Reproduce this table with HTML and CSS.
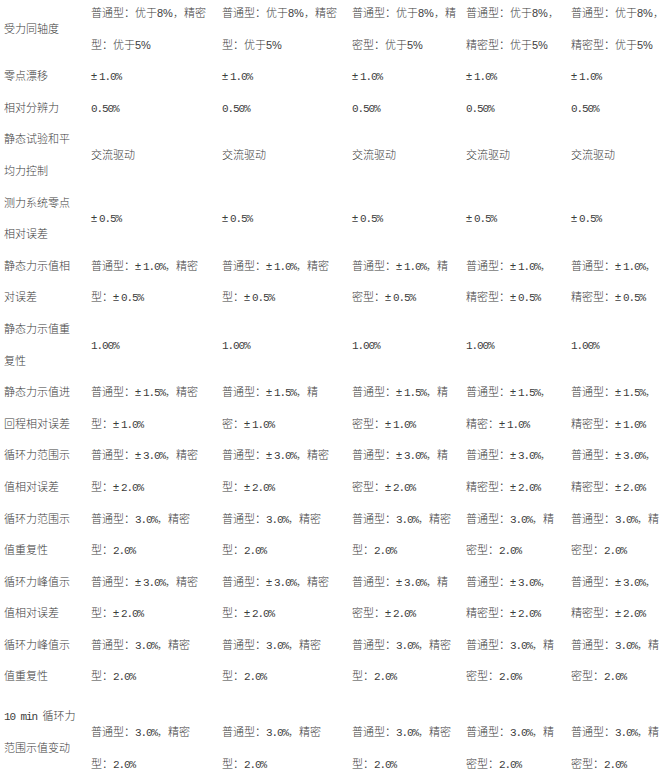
FILE: index.html
```html
<!DOCTYPE html>
<html lang="zh">
<head>
<meta charset="utf-8">
<title>技术参数</title>
<link rel="stylesheet" href="styles.css">
</head>
<body>
<table class="spec">
  <colgroup>
    <col class="c1"><col class="c2"><col class="c3"><col class="c4"><col class="c5"><col class="c6">
  </colgroup>
  <tbody>
    <tr>
      <td class="lab">受力同轴度</td>
      <td>普通型：优于<span class="s">8%</span>，精密<br>型：优于<span class="s">5%</span></td>
      <td>普通型：优于<span class="s">8%</span>，精密<br>型：优于<span class="s">5%</span></td>
      <td>普通型：优于<span class="s">8%</span>，精<br>密型：优于<span class="s">5%</span></td>
      <td>普通型：优于<span class="s">8%</span>，<br>精密型：优于<span class="s">5%</span></td>
      <td>普通型：优于<span class="s">8%</span>，<br>精密型：优于<span class="s">5%</span></td>
    </tr>
    <tr>
      <td class="lab">零点漂移</td>
      <td><span class="pm">±</span><span class="n">1.0%</span></td>
      <td><span class="pm">±</span><span class="n">1.0%</span></td>
      <td><span class="pm">±</span><span class="n">1.0%</span></td>
      <td><span class="pm">±</span><span class="n">1.0%</span></td>
      <td><span class="pm">±</span><span class="n">1.0%</span></td>
    </tr>
    <tr>
      <td class="lab">相对分辨力</td>
      <td><span class="n">0.50%</span></td>
      <td><span class="n">0.50%</span></td>
      <td><span class="n">0.50%</span></td>
      <td><span class="n">0.50%</span></td>
      <td><span class="n">0.50%</span></td>
    </tr>
    <tr>
      <td class="lab">静态试验和平<br>均力控制</td>
      <td>交流驱动</td>
      <td>交流驱动</td>
      <td>交流驱动</td>
      <td>交流驱动</td>
      <td>交流驱动</td>
    </tr>
    <tr>
      <td class="lab">测力系统零点<br>相对误差</td>
      <td><span class="pm">±</span><span class="n">0.5%</span></td>
      <td><span class="pm">±</span><span class="n">0.5%</span></td>
      <td><span class="pm">±</span><span class="n">0.5%</span></td>
      <td><span class="pm">±</span><span class="n">0.5%</span></td>
      <td><span class="pm">±</span><span class="n">0.5%</span></td>
    </tr>
    <tr>
      <td class="lab">静态力示值相<br>对误差</td>
      <td>普通型：<span class="pm">±</span><span class="n">1.0%</span>，精密<br>型：<span class="pm">±</span><span class="n">0.5%</span></td>
      <td>普通型：<span class="pm">±</span><span class="n">1.0%</span>，精密<br>型：<span class="pm">±</span><span class="n">0.5%</span></td>
      <td>普通型：<span class="pm">±</span><span class="n">1.0%</span>，精<br>密型：<span class="pm">±</span><span class="n">0.5%</span></td>
      <td>普通型：<span class="pm">±</span><span class="n">1.0%</span>，<br>精密型：<span class="pm">±</span><span class="n">0.5%</span></td>
      <td>普通型：<span class="pm">±</span><span class="n">1.0%</span>，<br>精密型：<span class="pm">±</span><span class="n">0.5%</span></td>
    </tr>
    <tr>
      <td class="lab">静态力示值重<br>复性</td>
      <td><span class="n">1.00%</span></td>
      <td><span class="n">1.00%</span></td>
      <td><span class="n">1.00%</span></td>
      <td><span class="n">1.00%</span></td>
      <td><span class="n">1.00%</span></td>
    </tr>
    <tr>
      <td class="lab">静态力示值进<br>回程相对误差</td>
      <td>普通型：<span class="pm">±</span><span class="n">1.5%</span>，精密<br>型：<span class="pm">±</span><span class="n">1.0%</span></td>
      <td>普通型：<span class="pm">±</span><span class="n">1.5%</span>，精<br>密：<span class="pm">±</span><span class="n">1.0%</span></td>
      <td>普通型：<span class="pm">±</span><span class="n">1.5%</span>，精<br>密型：<span class="pm">±</span><span class="n">1.0%</span></td>
      <td>普通型：<span class="pm">±</span><span class="n">1.5%</span>，<br>精密：<span class="pm">±</span><span class="n">1.0%</span></td>
      <td>普通型：<span class="pm">±</span><span class="n">1.5%</span>，<br>精密型：<span class="pm">±</span><span class="n">1.0%</span></td>
    </tr>
    <tr>
      <td class="lab">循环力范围示<br>值相对误差</td>
      <td>普通型：<span class="pm">±</span><span class="n">3.0%</span>，精密<br>型：<span class="pm">±</span><span class="n">2.0%</span></td>
      <td>普通型：<span class="pm">±</span><span class="n">3.0%</span>，精密<br>型：<span class="pm">±</span><span class="n">2.0%</span></td>
      <td>普通型：<span class="pm">±</span><span class="n">3.0%</span>，精<br>密型：<span class="pm">±</span><span class="n">2.0%</span></td>
      <td>普通型：<span class="pm">±</span><span class="n">3.0%</span>，<br>精密型：<span class="pm">±</span><span class="n">2.0%</span></td>
      <td>普通型：<span class="pm">±</span><span class="n">3.0%</span>，<br>精密型：<span class="pm">±</span><span class="n">2.0%</span></td>
    </tr>
    <tr>
      <td class="lab">循环力范围示<br>值重复性</td>
      <td>普通型：<span class="n">3.0%</span>，精密<br>型：<span class="n">2.0%</span></td>
      <td>普通型：<span class="n">3.0%</span>，精密<br>型：<span class="n">2.0%</span></td>
      <td>普通型：<span class="n">3.0%</span>，精密<br>型：<span class="n">2.0%</span></td>
      <td>普通型：<span class="n">3.0%</span>，精<br>密型：<span class="n">2.0%</span></td>
      <td>普通型：<span class="n">3.0%</span>，精<br>密型：<span class="n">2.0%</span></td>
    </tr>
    <tr>
      <td class="lab">循环力峰值示<br>值相对误差</td>
      <td>普通型：<span class="pm">±</span><span class="n">3.0%</span>，精密<br>型：<span class="pm">±</span><span class="n">2.0%</span></td>
      <td>普通型：<span class="pm">±</span><span class="n">3.0%</span>，精密<br>型：<span class="pm">±</span><span class="n">2.0%</span></td>
      <td>普通型：<span class="pm">±</span><span class="n">3.0%</span>，精<br>密型：<span class="pm">±</span><span class="n">2.0%</span></td>
      <td>普通型：<span class="pm">±</span><span class="n">3.0%</span>，<br>精密型：<span class="pm">±</span><span class="n">2.0%</span></td>
      <td>普通型：<span class="pm">±</span><span class="n">3.0%</span>，<br>精密型：<span class="pm">±</span><span class="n">2.0%</span></td>
    </tr>
    <tr>
      <td class="lab">循环力峰值示<br>值重复性</td>
      <td>普通型：<span class="n">3.0%</span>，精密<br>型：<span class="n">2.0%</span></td>
      <td>普通型：<span class="n">3.0%</span>，精密<br>型：<span class="n">2.0%</span></td>
      <td>普通型：<span class="n">3.0%</span>，精密<br>型：<span class="n">2.0%</span></td>
      <td>普通型：<span class="n">3.0%</span>，精<br>密型：<span class="n">2.0%</span></td>
      <td>普通型：<span class="n">3.0%</span>，精<br>密型：<span class="n">2.0%</span></td>
    </tr>
    <tr class="last">
      <td class="lab"><span class="n">10 min </span>循环力<br>范围示值变动</td>
      <td>普通型：<span class="n">3.0%</span>，精密<br>型：<span class="n">2.0%</span></td>
      <td>普通型：<span class="n">3.0%</span>，精密<br>型：<span class="n">2.0%</span></td>
      <td>普通型：<span class="n">3.0%</span>，精密<br>型：<span class="n">2.0%</span></td>
      <td>普通型：<span class="n">3.0%</span>，精<br>密型：<span class="n">2.0%</span></td>
      <td>普通型：<span class="n">3.0%</span>，精<br>密型：<span class="n">2.0%</span></td>
    </tr>
  </tbody>
</table>
</body>
</html>
```
FILE: styles.css
```css
html, body {
  margin: 0;
  padding: 0;
  background: #ffffff;
}

body {
  font-family: "Noto Sans CJK SC", "Liberation Sans", sans-serif;
  font-size: 11px;
  font-weight: 300;
  color: #3c3c3c;
}

.spec {
  border-collapse: collapse;
  table-layout: fixed;
  width: 669px;
  margin-top: -3px;
}

.c1 { width: 87px; }
.c2 { width: 131px; }
.c3 { width: 130px; }
.c4 { width: 114px; }
.c5 { width: 105px; }
.c6 { width: 102px; }

.spec td {
  padding: 0 0 0 4px;
  line-height: 31.6px;
  vertical-align: middle;
  white-space: nowrap;
  overflow: hidden;
}

.n {
  font-family: "Liberation Mono", monospace;
  font-weight: 400;
  letter-spacing: -1.1px;
  line-height: 1;
}

.s {
  font-family: "Liberation Sans", sans-serif;
  font-weight: 400;
  line-height: 1;
}

.pm {
  display: inline-block;
  width: 8px;
  font-family: "Liberation Sans", sans-serif;
  font-weight: 400;
  line-height: 1;
}

.spec .last td {
  vertical-align: top;
  padding-top: 24px;
}

.spec .last td.lab {
  padding-top: 8px;
}
```
